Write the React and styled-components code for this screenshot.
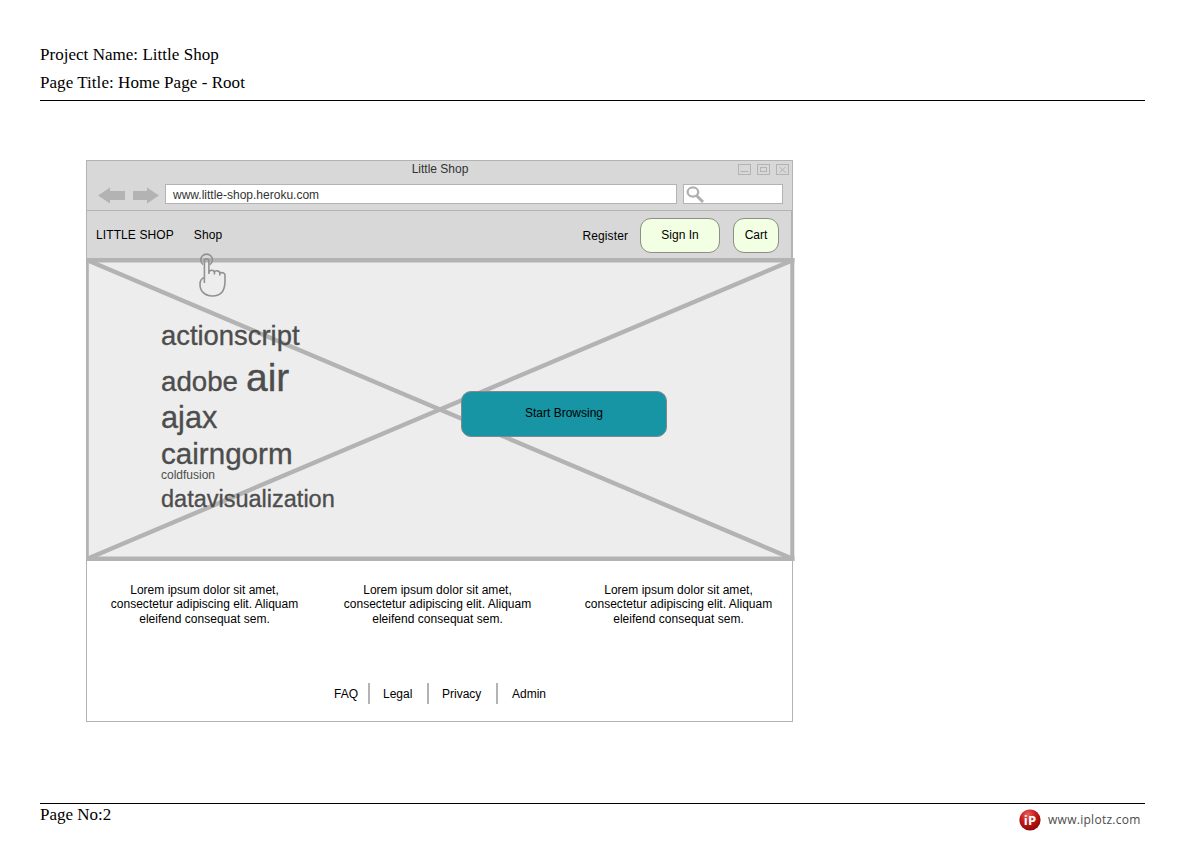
import React from "react";
import styled, { createGlobalStyle } from "styled-components";

const GlobalStyle = createGlobalStyle`
  * { box-sizing: border-box; }
  body { margin: 0; background: #fff; }
`;

const line = "#b3b3b3";

const Sheet = styled.div`
  width: 1193px;
  height: 844px;
  padding: 41px 48px 0 40px;
  display: flex;
  flex-direction: column;
  color: #000;
  font-family: "Liberation Sans", Arial, sans-serif;
  font-size: 12px;
  white-space: nowrap;
  overflow: hidden;
`;

const SheetHeader = styled.header`
  height: 60px;
  border-bottom: 1px solid #000;
`;

const SheetText = styled.div`
  font-family: "Liberation Serif", "Times New Roman", serif;
  font-size: 17px;
  line-height: 28px;
  letter-spacing: ${(p) => p.$track || 0}px;
`;

const SheetFooter = styled.footer`
  margin-top: 81px;
  border-top: 1px solid #000;
  display: flex;
  justify-content: space-between;
  align-items: flex-start;
  ${SheetText} { line-height: 22px; }
`;

const Brand = styled.div`
  display: flex;
  align-items: center;
  gap: 7px;
  margin: 4px 4px 0 0;
  height: 23px;
  color: #4c4c4c;
  font-family: "Open Sans", sans-serif;
  font-size: 12px;
  letter-spacing: 0.28px;
`;

const BrandUrl = styled.span`
  width: 93px;
  padding-bottom: 1px;
`;

const Browser = styled.main`
  width: 707px;
  height: 562px;
  margin: 59px 0 0 46px;
  border: 1px solid ${line};
  display: flex;
  flex-direction: column;
`;

const Chrome = styled.div`
  height: 50px;
  flex: none;
  background: #d8d8d8;
  border-bottom: 1px solid ${line};
  color: #333;
`;

const TitleBar = styled.div`
  height: 23px;
  display: grid;
  grid-template-columns: 1fr auto 1fr;
  align-items: start;
  line-height: 17px;
  padding-left: 1px;
`;

const WindowControls = styled.svg`
  justify-self: end;
  margin: 2px 2px 0 0;
`;

const AddressBar = styled.div`
  display: flex;
  padding-left: 10px;
  height: 20px;
`;

const Field = styled.div`
  width: ${(p) => p.$width}px;
  height: 20px;
  margin-left: ${(p) => p.$gap}px;
  padding-left: ${(p) => p.$inset}px;
  background: #fff;
  border: 1px solid ${line};
  line-height: 20px;
`;

const NavBar = styled.nav`
  height: 48px;
  flex: none;
  width: 705px;
  background: #d8d8d8;
  border-right: 1px solid ${line};
  padding: 0 12px 0 9px;
  display: flex;
  align-items: center;
`;

const NavLink = styled.span`
  margin-right: ${(p) => p.$after || 0}px;
  margin-left: ${(p) => (p.$push ? "auto" : 0)};
  padding-top: ${(p) => (p.$push ? 2 : 0)}px;
  letter-spacing: 0.1px;
`;

const NavButton = styled.button`
  width: ${(p) => p.$width}px;
  height: 35px;
  margin: 1px 0 0 ${(p) => p.$gap}px;
  padding: 0 0 2px;
  border: 1px solid #8c8f88;
  border-radius: 11px;
  background: #f2ffe3;
  color: #000;
  font: inherit;
`;

const Hero = styled.section`
  position: relative;
  height: 302px;
  flex: none;
  display: flex;
`;

const Placeholder = styled.svg`
  position: absolute;
  left: -1px;
  top: -1px;
`;

const TapHand = styled.svg`
  position: absolute;
  left: 111px;
  top: -8px;
`;

const TagCloud = styled.div`
  position: relative;
  width: 374px;
  padding: 62px 0 0 74px;
  color: #4d4d4d;
`;

const TagRow = styled.div`
  font-size: ${(p) => p.$size}px;
  line-height: ${(p) => p.$height}px;
  margin-top: ${(p) => p.$top || 0}px;
  -webkit-text-stroke: ${(p) => (p.$size > 14 ? 0.35 : 0)}px #4d4d4d;
`;

const SmallerTag = styled.span`
  font-size: 27.7px;
  line-height: 0;
  margin-right: 8px;
`;

const StartButton = styled.button`
  position: relative;
  width: 206px;
  height: 46px;
  margin-top: 132px;
  padding: 0 0 2px;
  border: 1px solid #84888a;
  border-radius: 10px;
  background: #1795a5;
  color: #000;
  font: inherit;
`;

const Columns = styled.section`
  display: flex;
  padding: 22px 0 0 22.5px;
  height: 122px;
`;

const Blurb = styled.p`
  width: 190px;
  margin: 0 ${(p) => p.$after}px 0 0;
  text-align: center;
  line-height: 14.4px;
  letter-spacing: 0.02px;
`;

const FooterNav = styled.nav`
  display: flex;
  align-items: center;
  height: 21px;
  padding-left: 247px;
`;

const FooterLink = styled.span`
  width: ${(p) => p.$width}px;
  height: 21px;
  line-height: 22px;
  margin-right: ${(p) => (p.$last ? 0 : 13)}px;
  padding-left: ${(p) => (p.$last ? 1 : 0)}px;
  border-right: ${(p) => (p.$last ? "none" : `2px solid ${line}`)};
`;

const ArrowIcon = styled.svg`
  margin-left: ${(p) => (p.$forward ? 6 : 0)}px;
`;

const Arrow = ({ forward }) => (
  <ArrowIcon $forward={forward} width="28" height="20" viewBox="0 0 28 20">
    <path
      d={forward ? "M2 7H16V3.5L28 11.5L16 19.5V16H2Z" : "M28 7H13V3.5L1 11.5L13 19.5V16H28Z"}
      fill="#b3b3b3"
    />
  </ArrowIcon>
);

const SearchIcon = styled.svg`
  display: block;
`;

const blurbs = [43, 51, 0];

export default function App() {
  return (
    <>
      <GlobalStyle />
      <Sheet>
        <SheetHeader>
          <SheetText $track={0.03}>Project Name: Little Shop</SheetText>
          <SheetText $track={0.05}>Page Title: Home Page - Root</SheetText>
        </SheetHeader>

        <Browser>
          <Chrome>
            <TitleBar>
              <span />
              <span>Little Shop</span>
              <WindowControls width="53" height="13" fill="none" stroke={line}>
                <rect x="1.5" y="1.5" width="12" height="10" />
                <path d="M3.5 8.5H11.5" />
                <rect x="20.5" y="1.5" width="12" height="10" />
                <rect x="23.5" y="4.5" width="6" height="4" />
                <rect x="39.5" y="1.5" width="12" height="10" />
                <path d="M42.5 4L48.5 9.5M48.5 4L42.5 9.5" />
              </WindowControls>
            </TitleBar>
            <AddressBar>
              <Arrow />
              <Arrow forward />
              <Field $width={512} $gap={6} $inset={7}>www.little-shop.heroku.com</Field>
              <Field $width={100} $gap={6} $inset={2}>
                <SearchIcon width="20" height="18" fill="none" stroke="#b0b0b0">
                  <ellipse cx="6.9" cy="7" rx="5.3" ry="4.6" strokeWidth="2.3" />
                  <path d="M10 10L17 17" strokeWidth="3" />
                </SearchIcon>
              </Field>
            </AddressBar>
          </Chrome>

          <NavBar>
            <NavLink $after={20}>LITTLE SHOP</NavLink>
            <NavLink>Shop</NavLink>
            <NavLink $push>Register</NavLink>
            <NavButton $width={80} $gap={12}>Sign In</NavButton>
            <NavButton $width={46} $gap={13}>Cart</NavButton>
          </NavBar>

          <Hero>
            <Placeholder width="709" height="304" viewBox="86 258 709 304">
              <rect x="87" y="260" width="705.5" height="299" fill="#ededed" />
              <path d="M88 260.5L792 558.5M88 558.5L792 260.5" stroke={line} strokeWidth="4.4" />
              <path d="M86 260.2H794.5M86 558.7H794.5" stroke={line} strokeWidth="4.4" />
              <path d="M792.3 258V561" stroke={line} strokeWidth="4" />
              <path d="M87.5 258V561" stroke={line} strokeWidth="2.6" />
            </Placeholder>
            <TapHand width="32" height="46" viewBox="198 251 32 46" fill="none" stroke="#929292" strokeWidth="1.6">
              <path d="M204.4 283V261C204.4 257.9 208.9 257.9 208.9 261V274V272.5C209.6 269.3 214.4 269.6 214.4 272.6V274.5M214.4 272.4C215.6 269.8 219.8 270.7 219.8 273.2V275.5M219.8 273.4C221.5 271.8 225 272.8 225 275.3V281C225 291 220.5 296 212.5 296C204.5 296 200 291 200 284.5C200 281 201.5 278.3 204.4 277.5" />
              <path d="M203.2 264.6A5.8 5.8 0 1 1 210 264.6" />
            </TapHand>
            <TagCloud>
              <TagRow $size={27.4} $height={30}>actionscript</TagRow>
              <TagRow $size={39} $height={54}><SmallerTag>adobe</SmallerTag>air</TagRow>
              <TagRow $size={30.7} $height={26}>ajax</TagRow>
              <TagRow $size={29.6} $height={36} $top={5}>cairngorm</TagRow>
              <TagRow $size={12} $height={6}>coldfusion</TagRow>
              <TagRow $size={23.5} $height={43}>datavisualization</TagRow>
            </TagCloud>
            <StartButton>Start Browsing</StartButton>
          </Hero>

          <Columns>
            {blurbs.map((after, i) => (
              <Blurb key={i} $after={after}>
                Lorem ipsum dolor sit amet,<br />
                consectetur adipiscing elit. Aliquam<br />
                eleifend consequat sem.
              </Blurb>
            ))}
          </Columns>

          <FooterNav>
            <FooterLink $width={36}>FAQ</FooterLink>
            <FooterLink $width={46}>Legal</FooterLink>
            <FooterLink $width={56}>Privacy</FooterLink>
            <FooterLink $width={40} $last>Admin</FooterLink>
          </FooterNav>
        </Browser>

        <SheetFooter>
          <SheetText>Page No:2</SheetText>
          <Brand>
            <svg width="22" height="22" viewBox="0 0 22 22">
              <defs>
                <radialGradient id="ball" cx="0.4" cy="0.25" r="0.75">
                  <stop offset="0" stopColor="#e8605c" />
                  <stop offset="0.5" stopColor="#c41a1a" />
                  <stop offset="1" stopColor="#8f0606" />
                </radialGradient>
              </defs>
              <circle cx="11" cy="11" r="10.6" fill="url(#ball)" />
              <text x="11" y="15.6" textAnchor="middle" fill="#fff" fontFamily="Open Sans, sans-serif" fontWeight="700" fontSize="13">iP</text>
            </svg>
            <BrandUrl>www.iplotz.com</BrandUrl>
          </Brand>
        </SheetFooter>
      </Sheet>
    </>
  );
}
